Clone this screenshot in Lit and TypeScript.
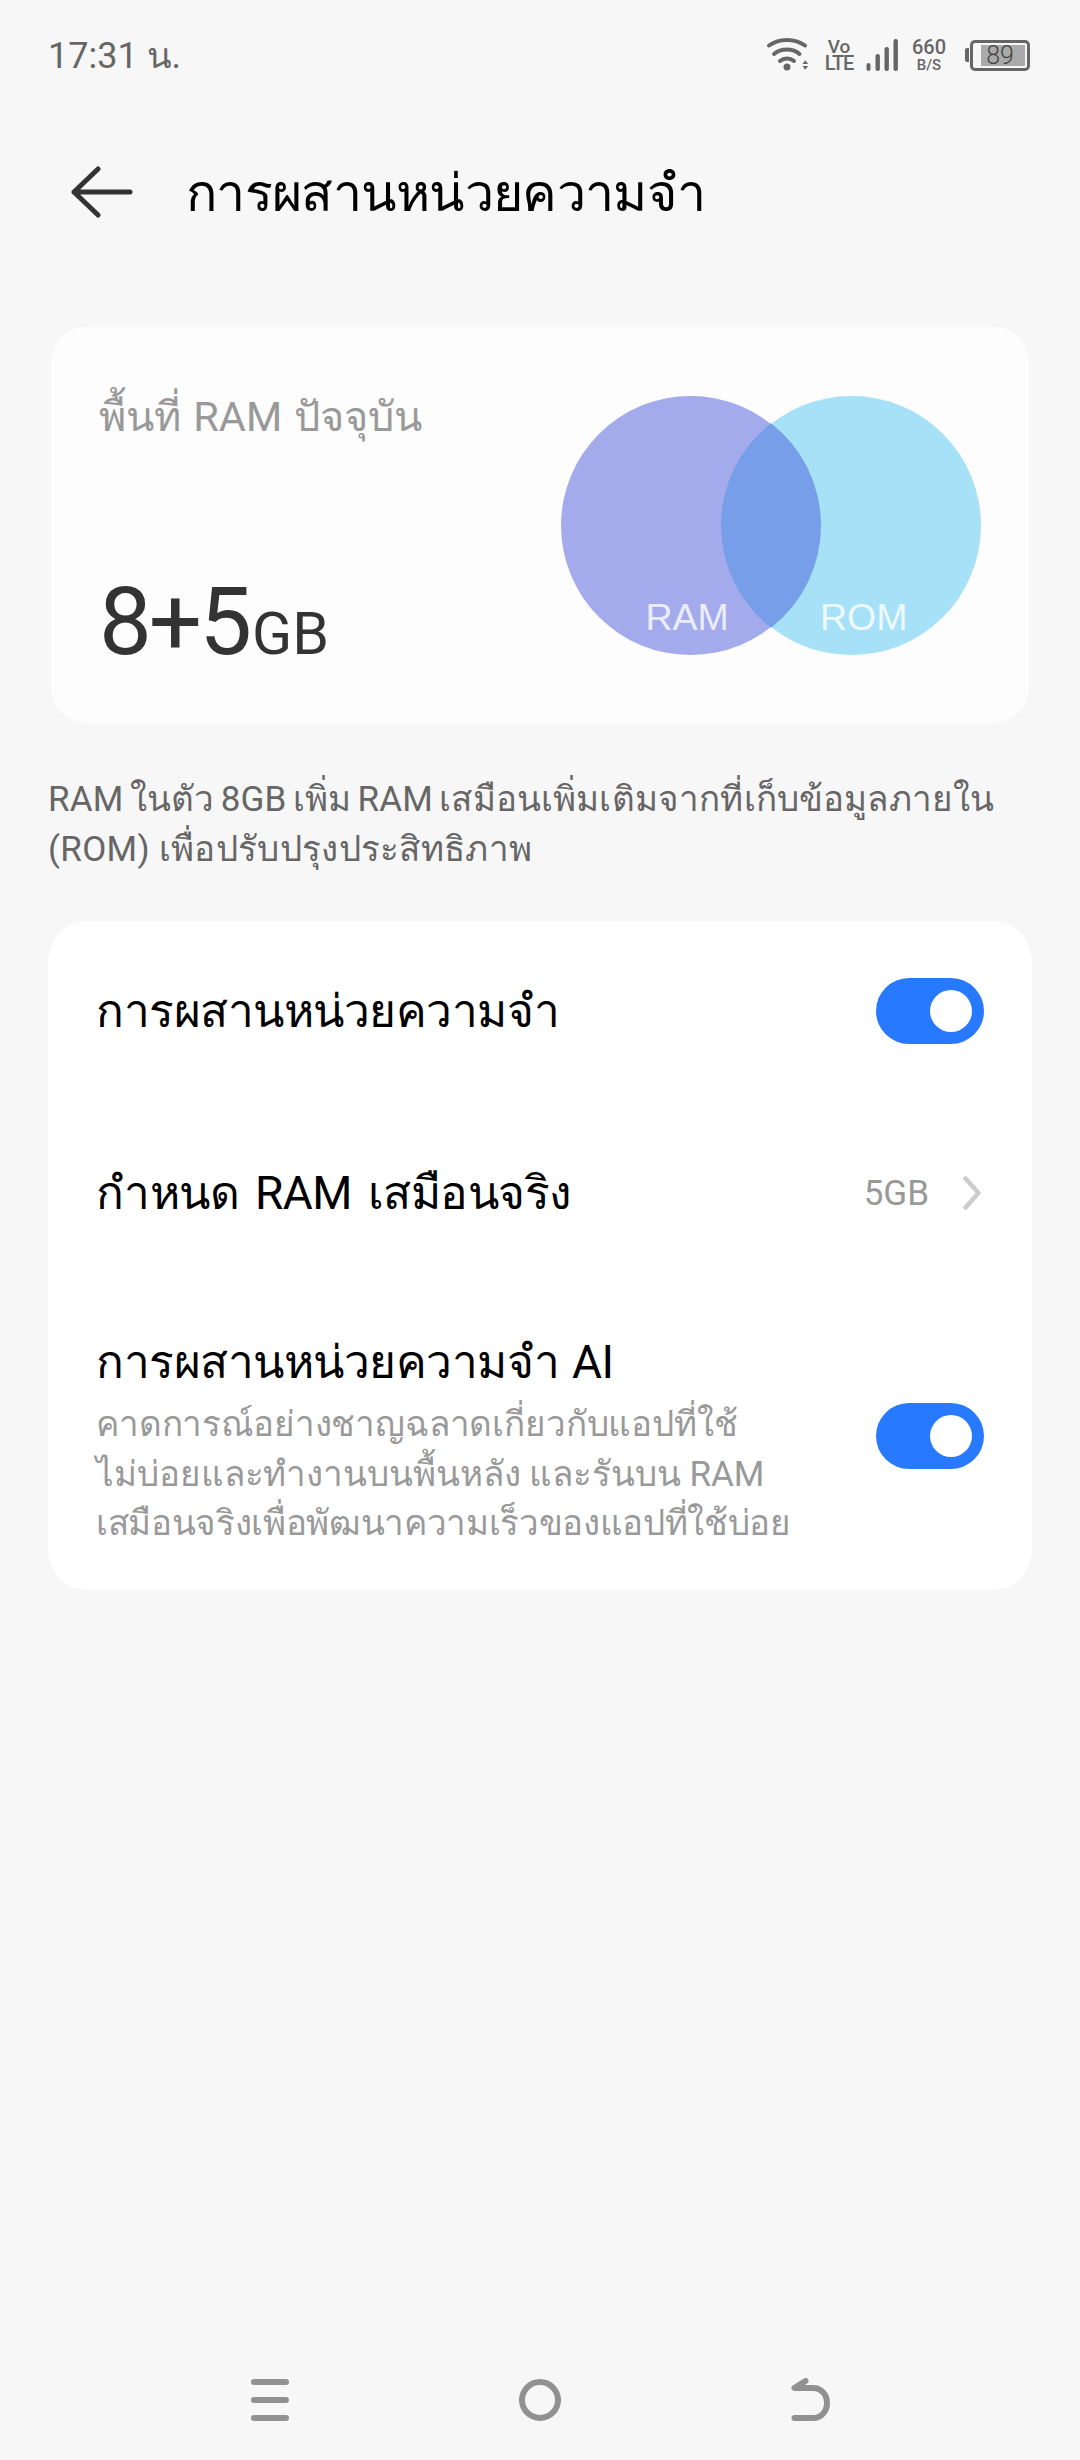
import { LitElement, css, html, svg } from "lit";
import { customElement, property } from "lit/decorators.js";

@customElement("app-toggle")
export class AppToggle extends LitElement {
  render() {
    return html`<div class="track"><div class="knob"></div></div>`;
  }

  static styles = css`
    :host {
      display: block;
      flex: none;
    }
    .track {
      width: 108px;
      height: 66px;
      border-radius: 33px;
      background: #277aff;
      display: flex;
      align-items: center;
      justify-content: flex-end;
      padding-right: 12px;
      box-sizing: border-box;
    }
    .knob {
      width: 42px;
      height: 42px;
      border-radius: 50%;
      background: #fff;
    }
  `;
}

@customElement("status-icons")
export class StatusIcons extends LitElement {
  @property({ type: Number }) battery = 89;

  render() {
    return html`
      <svg class="wifi" width="43" height="36" viewBox="0 0 43 36" fill="none" stroke="#666" stroke-linecap="round">
        <path d="M3 8.5C13 1 29 1 39 8.5" stroke-width="4" />
        <path d="M8 17C15 11 27 11 33.5 17" stroke-width="4" />
        <path d="M14 24C18 20.5 24 20.5 28 24" stroke-width="4" />
        <circle cx="21" cy="30" r="3.5" fill="#666" stroke="none" />
        <path d="M36.5 27l2.8-3.8 2.8 3.8zM36.5 29l2.8 3.8 2.8-3.8z" fill="#666" stroke="none" />
      </svg>
      <div class="volte"><span class="vo">Vo</span><span class="lte">LTE</span></div>
      <svg class="signal" width="32" height="34" viewBox="0 0 32 34" fill="#666">
        <rect x="0.5" y="25" width="4" height="8" rx="2" />
        <rect x="9.5" y="16" width="4.4" height="17" rx="2" />
        <rect x="18.5" y="9" width="4.4" height="24" rx="2" />
        <rect x="27.5" y="1" width="4.4" height="32" rx="2" />
      </svg>
      <div class="speed"><span class="num">660</span><span class="unit">B/S</span></div>
      <div class="battery">
        <div class="nub"></div>
        <div class="body">
          <div class="level"><span>${this.battery}</span></div>
        </div>
      </div>
    `;
  }

  static styles = css`
    :host {
      display: flex;
      align-items: center;
      font-family: Roboto, sans-serif;
      color: #666;
    }
    svg {
      display: block;
      flex: none;
    }
    .volte {
      display: flex;
      flex-direction: column;
      align-items: center;
      width: 30px;
      margin-left: 15px;
      font-weight: 500;
    }
    .vo {
      font-size: 19px;
      line-height: 17px;
    }
    .lte {
      font-size: 20px;
      line-height: 17px;
      letter-spacing: -1.2px;
    }
    .signal {
      margin-left: 12px;
    }
    .speed {
      display: flex;
      flex-direction: column;
      align-items: center;
      width: 34px;
      margin-left: 14px;
      font-weight: 500;
    }
    .num {
      font-size: 20px;
      line-height: 20px;
    }
    .unit {
      font-size: 15px;
      line-height: 15px;
      margin-top: 1px;
    }
    .battery {
      display: flex;
      align-items: center;
      margin-left: 19px;
    }
    .nub {
      width: 4px;
      height: 14px;
      border-radius: 2px 0 0 2px;
      background: #666;
      margin-right: 1px;
    }
    .body {
      width: 60px;
      height: 31px;
      box-sizing: border-box;
      border: 3px solid #666;
      border-radius: 5px;
      padding: 2px 2px 2px 8px;
    }
    .level {
      height: 100%;
      background: #aaa;
      display: flex;
      align-items: center;
      justify-content: center;
      padding-right: 6px;
      box-sizing: border-box;
      font-size: 25px;
      font-weight: 300;
      color: #444;
    }
  `;
}

@customElement("app-root")
export class AppRoot extends LitElement {
  private _venn() {
    return svg`
      <circle cx="129.5" cy="129.5" r="129.5" fill="#a3abec" />
      <circle cx="290.5" cy="129.5" r="129.5" fill="#a6e1f7" />
      <path d="M210 27.3A129.5 129.5 0 0 1 210 231.7A129.5 129.5 0 0 1 210 27.3Z" fill="#779ee8" />
      <text x="84.5" y="234" class="ram">RAM</text>
      <text x="259" y="234" class="rom">ROM</text>
    `;
  }

  render() {
    return html`
      <div class="status">
        <span class="time">17:31 น.</span>
        <status-icons></status-icons>
      </div>

      <div class="header">
        <svg class="back" width="62" height="52" viewBox="0 0 62 52" fill="none" stroke="#333" stroke-width="5" stroke-linecap="round" stroke-linejoin="round">
          <path d="M27 3L3 26L27 49M3 26H59" />
        </svg>
        <div class="title">การผสานหน่วยความจำ</div>
      </div>

      <section class="ram-card">
        <div class="ram-info">
          <div class="ram-label">พื้นที่ RAM ปัจจุบัน</div>
          <div class="ram-size">8+5<span class="unit">GB</span></div>
        </div>
        <svg class="venn" width="420" height="259" viewBox="0 0 420 259">${this._venn()}</svg>
      </section>

      <div class="desc">
        <div>RAM ในตัว 8GB เพิ่ม RAM เสมือนเพิ่มเติมจากที่เก็บข้อมูลภายใน</div>
        <div class="desc-end">(ROM) เพื่อปรับปรุงประสิทธิภาพ</div>
      </div>

      <section class="list">
        <div class="row first">
          <div class="row-title">การผสานหน่วยความจำ</div>
          <app-toggle></app-toggle>
        </div>
        <div class="row second">
          <div class="row-title">กำหนด RAM เสมือนจริง</div>
          <div class="value">
            <span>5GB</span>
            <svg width="18" height="34" viewBox="0 0 18 34" fill="none" stroke="#ccc" stroke-width="4.5" stroke-linecap="round" stroke-linejoin="round">
              <path d="M2.5 2.5L15.5 17L2.5 31.5" />
            </svg>
          </div>
        </div>
        <div class="row third">
          <div class="row-text">
            <div class="row-title">การผสานหน่วยความจำ AI</div>
            <div class="row-sub">
              <div>คาดการณ์อย่างชาญฉลาดเกี่ยวกับแอปที่ใช้</div>
              <div class="loose">ไม่บ่อยและทำงานบนพื้นหลัง และรันบน RAM</div>
              <div class="tight">เสมือนจริงเพื่อพัฒนาความเร็วของแอปที่ใช้บ่อย</div>
            </div>
          </div>
          <app-toggle></app-toggle>
        </div>
      </section>

      <div class="spacer"></div>

      <nav class="nav">
        <svg width="38" height="42" viewBox="0 0 38 42" stroke="#919191" stroke-width="6" stroke-linecap="round">
          <path d="M3 3H35M3 21H35M3 39H35" />
        </svg>
        <svg width="42" height="42" viewBox="0 0 42 42" fill="none" stroke="#919191" stroke-width="6">
          <circle cx="21" cy="21" r="18" />
        </svg>
        <svg width="39" height="44" viewBox="0 0 39 44" fill="none" stroke="#919191" stroke-width="6" stroke-linecap="round" stroke-linejoin="round">
          <path d="M14.5 3L3.5 10H22C30 10 36 16.5 36 25C36 33.5 30 40 22 40H3.5" />
        </svg>
      </nav>
    `;
  }

  static styles = css`
    :host {
      display: flex;
      flex-direction: column;
      width: 1080px;
      height: 2460px;
      background: #f7f7f7;
      font-family: Roboto, "Noto Sans", sans-serif;
      overflow: hidden;
    }
    .status {
      display: flex;
      align-items: center;
      justify-content: space-between;
      height: 110px;
      padding: 0 50px 0 48px;
      box-sizing: border-box;
    }
    .time {
      font-size: 36px;
      color: #666;
    }
    .header {
      display: flex;
      align-items: center;
      height: 164px;
      padding-left: 71px;
    }
    .back {
      display: block;
      flex: none;
    }
    .title {
      margin: 3px 0 0 53px;
      font-size: 52px;
      letter-spacing: -0.7px;
      color: #000;
      line-height: 70px;
    }
    .ram-card {
      display: flex;
      justify-content: space-between;
      height: 396px;
      margin: 53px 51px 0;
      padding: 69px 48px 0 48px;
      box-sizing: border-box;
      border-radius: 35px;
      background: #fdfdfd;
    }
    .ram-info {
      display: flex;
      flex-direction: column;
    }
    .ram-label {
      margin-top: -9px;
      font-size: 41.5px;
      word-spacing: 2px;
      line-height: 60px;
      color: #999;
    }
    .ram-size {
      margin-top: 121px;
      font-size: 94px;
      letter-spacing: -3px;
      line-height: 108px;
      color: #333;
    }
    .unit {
      margin-left: 3px;
      font-size: 59px;
      letter-spacing: 0;
    }
    .venn {
      display: block;
      flex: none;
    }
    .venn text {
      font-family: "Liberation Sans", sans-serif;
      font-size: 37.5px;
    }
    .ram {
      fill: #ecedfb;
    }
    .rom {
      fill: #edf9fd;
    }
    .desc {
      margin: 52px 48px 0;
      font-size: 35px;
      letter-spacing: 0.15px;
      word-spacing: -2.5px;
      line-height: 50px;
      color: #666;
    }
    .desc-end {
      letter-spacing: 0.3px;
      word-spacing: 0;
    }
    .list {
      margin: 46px 48px 0;
      padding: 0 48px;
      border-radius: 40px;
      background: #fff;
      height: 669px;
      box-sizing: border-box;
    }
    .row {
      display: flex;
      align-items: center;
      justify-content: space-between;
    }
    .first {
      height: 180px;
    }
    .second {
      height: 184px;
    }
    .third {
      padding-top: 45px;
    }
    .third app-toggle {
      margin-bottom: 6px;
    }
    .row-title {
      font-size: 46px;
      letter-spacing: -0.5px;
      word-spacing: 5px;
      line-height: 64px;
      color: #000;
    }
    .third .row-title {
      word-spacing: 2px;
    }
    .row-sub {
      margin-top: 6px;
      font-size: 35px;
      letter-spacing: -0.15px;
      line-height: 49.5px;
      color: #999;
    }
    .row-sub .loose {
      letter-spacing: -0.07px;
    }
    .row-sub .tight {
      letter-spacing: -0.33px;
    }
    .value {
      display: flex;
      align-items: center;
      margin-right: 3px;
      font-size: 35px;
      color: #999;
    }
    .value svg {
      display: block;
      margin-left: 34px;
    }
    .spacer {
      flex: 1;
    }
    .nav {
      display: flex;
      align-items: center;
      gap: 230px;
      height: 84px;
      margin-bottom: 18px;
      padding-left: 251px;
    }
    .nav svg {
      display: block;
    }
  `;
}
